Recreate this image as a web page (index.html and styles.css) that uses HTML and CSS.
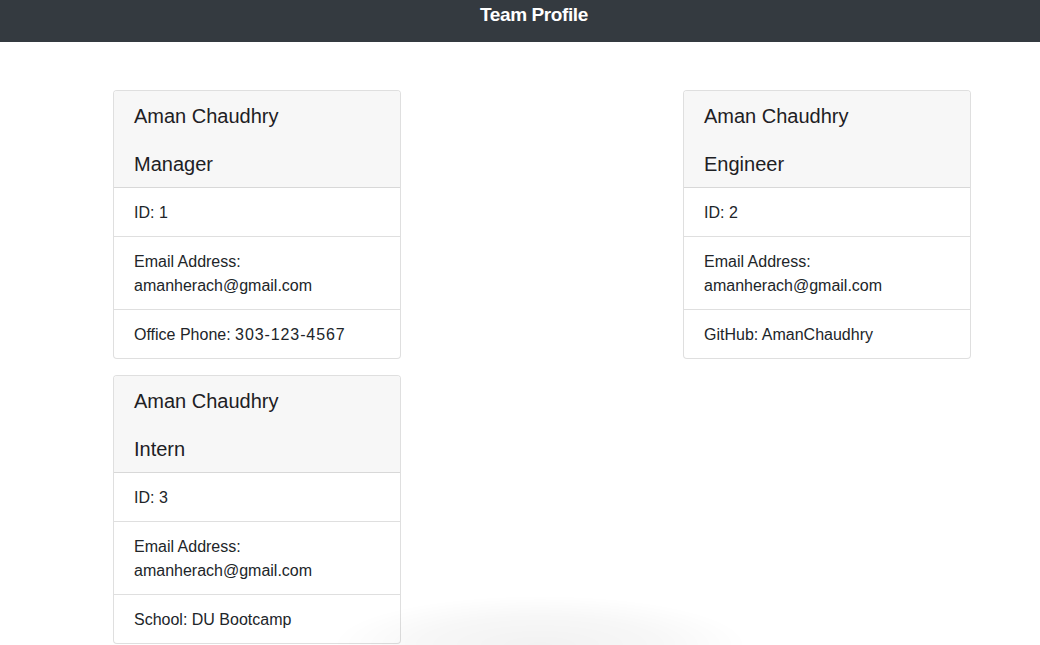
FILE: index.html
```html
<!DOCTYPE html>
<html lang="en">
<head>
<meta charset="utf-8">
<title>Team Profile</title>
<link rel="stylesheet" href="styles.css">
</head>
<body>
<header class="topbar">
  <h1 class="topbar-title">Team Profile</h1>
</header>
<main class="team">
  <section class="card">
    <div class="card-header">
      <h5 class="card-name">Aman Chaudhry</h5>
      <h5 class="card-role">Manager</h5>
    </div>
    <ul class="card-list">
      <li class="card-item">ID: 1</li>
      <li class="card-item">Email Address: amanherach@gmail.com</li>
      <li class="card-item">Office Phone: <span class="num">303-123-4567</span></li>
    </ul>
  </section>
  <section class="card">
    <div class="card-header">
      <h5 class="card-name">Aman Chaudhry</h5>
      <h5 class="card-role">Engineer</h5>
    </div>
    <ul class="card-list">
      <li class="card-item">ID: 2</li>
      <li class="card-item">Email Address: amanherach@gmail.com</li>
      <li class="card-item">GitHub: AmanChaudhry</li>
    </ul>
  </section>
  <section class="card">
    <div class="card-header">
      <h5 class="card-name">Aman Chaudhry</h5>
      <h5 class="card-role">Intern</h5>
    </div>
    <ul class="card-list">
      <li class="card-item">ID: 3</li>
      <li class="card-item">Email Address: amanherach@gmail.com</li>
      <li class="card-item">School: DU Bootcamp</li>
    </ul>
  </section>
</main>
<div class="edge-shade"></div>
</body>
</html>
```

FILE: styles.css
```css
* { box-sizing: border-box; }
html, body {
  margin: 0;
  padding: 0;
  background: #fff;
}
body {
  font-family: "Liberation Sans", Arial, Helvetica, sans-serif;
  font-size: 16px;
  line-height: 1.5;
  color: #212529;
  overflow: hidden;
  height: 645px;
}
.topbar {
  background: #343a40;
  height: 42px;
  display: flex;
  justify-content: center;
  align-items: flex-start;
  padding-left: 28px;
}
.topbar-title {
  margin: 0;
  color: #fff;
  font-size: 19px;
  font-weight: 700;
  line-height: 30px;
  letter-spacing: -0.4px;
}
.team {
  display: grid;
  grid-template-columns: 288px 288px;
  column-gap: 282px;
  row-gap: 16px;
  align-items: start;
  padding: 48px 0 0 113px;
}
.card {
  border: 1px solid rgba(0, 0, 0, 0.125);
  border-radius: 4px;
  background: #fff;
  overflow: hidden;
}
.card-header {
  background: #f7f7f7;
  padding: 13px 20px 11px;
  border-bottom: 1px solid rgba(0, 0, 0, 0.125);
  display: flex;
  flex-direction: column;
  gap: 24px;
}
.card-name, .card-role {
  margin: 0;
  font-size: 20px;
  font-weight: 500;
  line-height: 24px;
  color: #1d2024;
}
.card-list {
  list-style: none;
  margin: 0;
  padding: 0;
}
.card-item {
  padding: 13px 20px 11px;
  border-bottom: 1px solid rgba(0, 0, 0, 0.125);
}
.card-item:last-child { border-bottom: 0; }
.num { letter-spacing: 0.9px; }
.edge-shade {
  position: fixed;
  left: 330px;
  width: 420px;
  bottom: -50px;
  height: 100px;
  pointer-events: none;
  background: radial-gradient(ellipse at center, rgba(0,0,0,0.05) 0%, rgba(0,0,0,0.03) 40%, rgba(0,0,0,0) 70%);
}
```
